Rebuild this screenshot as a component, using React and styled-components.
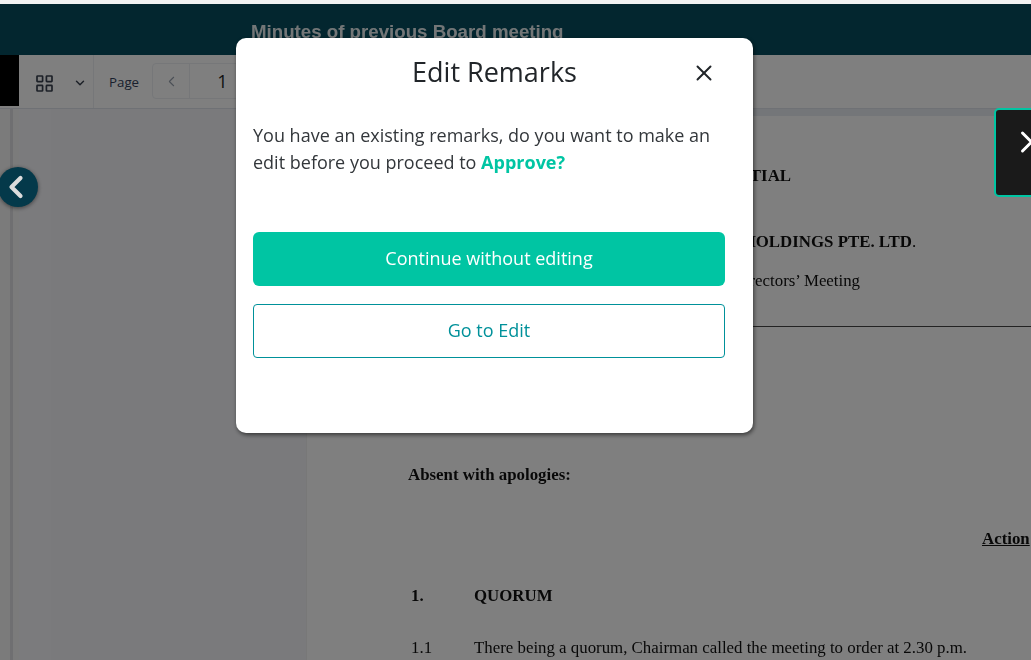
import React from "react"
import styled, { createGlobalStyle } from "styled-components"
import { X, ChevronLeft, ChevronRight, ChevronDown } from "lucide-react"

const Global = createGlobalStyle`
    html, body {
        margin: 0;
        padding: 0;
        height: 100%;
        overflow: hidden;
        background: #f2f2f2;
    }
    * {
        box-sizing: border-box;
    }
`

export default function App() {
    return (
        <>
            <Global />
            <Page>
                <Header>
                    <HeaderTitle>Minutes of previous Board meeting</HeaderTitle>
                </Header>
                <Toolbar>
                    <BlackTab />
                    <ViewGroup>
                        <GridIcon />
                        <ChevronDown size={14} strokeWidth={2.5} />
                    </ViewGroup>
                    <PageLabel>Page</PageLabel>
                    <Pager>
                        <PagerArrow><ChevronLeft size={17} strokeWidth={1.5} /></PagerArrow>
                        <PagerNumber>1</PagerNumber>
                    </Pager>
                </Toolbar>
                <Workspace>
                    <Rail />
                    <Thumbnails />
                    <Doc>
                        <DocText>
                            <Confidential>CONFIDENTIAL</Confidential>
                            <Company><b>MINUTES OF ABC HOLDINGS PTE. LTD</b>.</Company>
                            <MeetingName>Minutes of Directors’ Meeting</MeetingName>
                            <Rule />
                            <Absent>Absent with apologies:</Absent>
                            <Action><u>Action</u></Action>
                            <Section>
                                <Num>1.</Num>
                                <span>QUORUM</span>
                            </Section>
                            <Clause>
                                <Num>1.1</Num>
                                <span>There being a quorum, Chairman called the meeting to order at 2.30 p.m.</span>
                            </Clause>
                        </DocText>
                    </Doc>
                </Workspace>
            </Page>

            <Overlay />

            <CollapseButton><ChevronLeft size={36} strokeWidth={2.8} /></CollapseButton>
            <NextTab><ChevronRight size={36} strokeWidth={2} /></NextTab>

            <Modal>
                <ModalHead>
                    <ModalTitle>Edit Remarks</ModalTitle>
                    <CloseButton><X size={26} strokeWidth={1.8} /></CloseButton>
                </ModalHead>
                <Message>
                    You have an existing remarks, do you want to make an edit before you proceed to <strong>Approve?</strong>
                </Message>
                <PrimaryButton>Continue without editing</PrimaryButton>
                <OutlineButton>Go to Edit</OutlineButton>
            </Modal>
        </>
    )
}

function GridIcon() {
    return (
        <svg width="17" height="17" viewBox="0 0 17 17" fill="none" stroke="currentColor" strokeWidth="1.7">
            <rect x="1" y="1" width="5.6" height="5.6" rx="0.6" />
            <rect x="10.4" y="1" width="5.6" height="5.6" rx="0.6" />
            <rect x="1" y="10.4" width="5.6" height="5.6" rx="0.6" />
            <rect x="10.4" y="10.4" width="5.6" height="5.6" rx="0.6" />
        </svg>
    )
}

const Page = styled.div`
    height: 660px;
    margin-top: 4px;
    display: flex;
    flex-direction: column;
    overflow: hidden;
    background: #ffffff;
`
const Header = styled.div`
    height: 51px;
    flex-shrink: 0;
    background: #064c5e;
    padding: 18px 0 0 251px;
`
const HeaderTitle = styled.div`
    font-family: "Liberation Sans", Arial, sans-serif;
    font-weight: 700;
    font-size: 18.7px;
    line-height: 20px;
    color: #ffffff;
    opacity: 0.9;
`
const Toolbar = styled.div`
    height: 54px;
    flex-shrink: 0;
    display: flex;
    align-items: stretch;
    background: #ffffff;
    border-bottom: 1px solid #dee2ea;
`
const BlackTab = styled.div`
    width: 19px;
    height: 51px;
    background: #000000;
`
const ViewGroup = styled.div`
    width: 75px;
    display: flex;
    align-items: center;
    gap: 20px;
    padding-left: 17px;
    padding-top: 3px;
    color: #3a4250;
    border-right: 1px solid #eceef2;
`
const PageLabel = styled.div`
    font-family: "Open Sans", sans-serif;
    font-weight: 500;
    font-size: 13.3px;
    line-height: 54px;
    color: #33415c;
    margin-left: 15px;
    width: 43px;
`
const Pager = styled.div`
    width: 120px;
    height: 36px;
    margin-top: 8px;
    display: flex;
    border: 1px solid #eceef2;
    border-radius: 4px;
`
const PagerArrow = styled.div`
    width: 37px;
    display: flex;
    align-items: center;
    justify-content: center;
    color: #97a0ad;
    border-right: 1px solid #eceef2;
`
const PagerNumber = styled.div`
    flex: 1;
    text-align: center;
    font-family: "Open Sans", sans-serif;
    font-size: 18px;
    line-height: 34px;
    color: #1c1f24;
    padding-right: 16px;
`
const Workspace = styled.div`
    flex: 1;
    display: flex;
    min-height: 0;
`
const Rail = styled.div`
    width: 19px;
    flex-shrink: 0;
    background: linear-gradient(to right, #f6f6f6 0 10px, #dfdfe2 10px 13px, #f6f6f6 13px);
`
const Thumbnails = styled.div`
    width: 287px;
    flex-shrink: 0;
    background: linear-gradient(to right, #f6f6fa 0 32px, #f4f5f9 32px);
`
const Doc = styled.div`
    flex: 1;
    min-width: 0;
    background: #ffffff;
    border-left: 1px solid #f0f0f0;
    border-top: 7px solid #e8ecf2;
    overflow: hidden;
`
const DocText = styled.div`
    padding: 50px 0 0 101px;
    font-family: "Liberation Serif", "Times New Roman", serif;
    font-size: 16.85px;
    color: #111111;
    filter: blur(0.3px);
`
const Confidential = styled.div`
    font-weight: 700;
    line-height: 20px;
    padding-left: 252px;
    white-space: nowrap;
`
const Company = styled.div`
    line-height: 20px;
    margin-top: 46px;
    padding-left: 186px;
    white-space: nowrap;
`
const MeetingName = styled.div`
    line-height: 20px;
    margin-top: 19px;
    padding-left: 247px;
    white-space: nowrap;
`
const Rule = styled.div`
    height: 1px;
    margin: 35px 0 0 -20px;
    background: #444444;
`
const Absent = styled.div`
    font-weight: 700;
    line-height: 20px;
    margin-top: 138px;
`
const Action = styled.div`
    font-weight: 700;
    line-height: 20px;
    margin-top: 44px;
    padding-left: 574px;
    white-space: nowrap;
`
const Section = styled.div`
    display: flex;
    font-weight: 700;
    line-height: 20px;
    margin-top: 37px;
    padding-left: 3px;
`
const Clause = styled.div`
    display: flex;
    line-height: 20px;
    margin-top: 32px;
    padding-left: 3px;
    white-space: nowrap;
`
const Num = styled.span`
    width: 63px;
    flex-shrink: 0;
`
const Overlay = styled.div`
    position: fixed;
    inset: 4px 0 0 0;
    background: rgba(0, 0, 0, 0.5);
`
const CollapseButton = styled.button`
    position: fixed;
    left: -2px;
    top: 167px;
    width: 40px;
    height: 40px;
    padding: 0 4px 0 0;
    border: none;
    border-radius: 50%;
    background: #04394a;
    color: #dcdcdc;
    box-shadow: 0 1px 4px rgba(0, 0, 0, 0.5);
    display: flex;
    align-items: center;
    justify-content: center;
`
const NextTab = styled.div`
    position: fixed;
    left: 994px;
    top: 108px;
    width: 60px;
    height: 89px;
    background: #1a1a1a;
    border: 2px solid #00c5a3;
    border-radius: 5px;
    color: #ffffff;
    padding: 14px 0 0 13px;
`
const Modal = styled.div`
    position: fixed;
    left: 236px;
    top: 38px;
    width: 517px;
    height: 395px;
    background: #ffffff;
    border-radius: 10px;
    padding: 0 28px 0 17px;
    box-shadow: 1px 2px 4px rgba(0, 0, 0, 0.55);
    font-family: "Open Sans", sans-serif;
`
const ModalHead = styled.div`
    height: 68px;
    margin: 0 -28px 0 -17px;
    position: relative;
    display: flex;
    align-items: center;
    justify-content: center;
`
const ModalTitle = styled.div`
    font-size: 27px;
    line-height: 68px;
    color: #212529;
`
const CloseButton = styled.div`
    position: absolute;
    right: 36px;
    top: 22px;
    display: flex;
    color: #212529;
`
const Message = styled.p`
    margin: 16px 0 0;
    font-size: 18px;
    line-height: 27px;
    color: #33373b;
    strong {
        font-weight: 700;
        color: #00c5a3;
    }
`
const PrimaryButton = styled.div`
    height: 54px;
    margin-top: 56px;
    padding-bottom: 2px;
    display: flex;
    align-items: center;
    justify-content: center;
    border-radius: 6px;
    background: #00c5a3;
    color: #ffffff;
    font-size: 18px;
    font-weight: 500;
`
const OutlineButton = styled.div`
    height: 54px;
    margin-top: 18px;
    padding-bottom: 2px;
    display: flex;
    align-items: center;
    justify-content: center;
    border-radius: 4px;
    border: 1px solid #00919a;
    background: #ffffff;
    color: #00919a;
    font-size: 18px;
`
